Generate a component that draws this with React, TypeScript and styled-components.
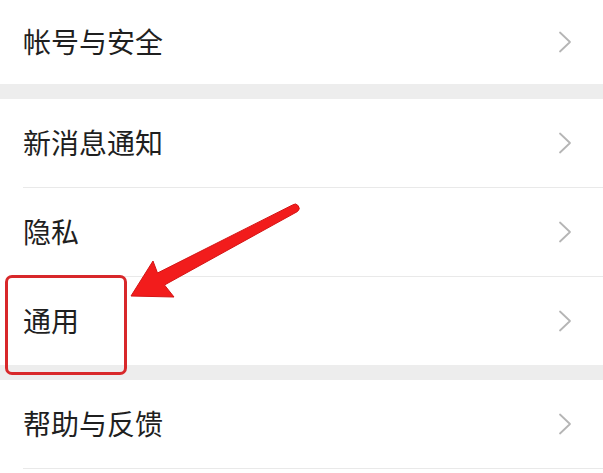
import styled, { createGlobalStyle } from "styled-components";

const GlobalStyle = createGlobalStyle`
  html, body {
    margin: 0;
    padding: 0;
    background: #ededed;
  }
  body {
    font-family: "Noto Sans CJK SC", "Noto Sans", sans-serif;
    overflow: hidden;
  }
`;

const Page = styled.div`
  position: relative;
  width: 603px;
  height: 473px;
  overflow: hidden;
  background: #ededed;
  display: flex;
  flex-direction: column;
  gap: 15px;
`;

const Group = styled.div`
  background: #ffffff;
  display: flex;
  flex-direction: column;
`;

interface RowProps {
  readonly $height?: number;
  readonly $divider?: boolean;
}

const Row = styled.div<RowProps>`
  position: relative;
  flex: 0 0 auto;
  height: ${(p) => p.$height ?? 88}px;
  display: flex;
  align-items: center;
  justify-content: space-between;
  padding: 0 31px 0 23px;
  border-bottom: ${(p) => (p.$divider ? "1px solid transparent" : "none")};
  &::after {
    content: "";
    display: ${(p) => (p.$divider ? "block" : "none")};
    position: absolute;
    left: 23px;
    right: 0;
    bottom: -1px;
    height: 1px;
    background: #e9e9e9;
  }
`;

const Label = styled.span`
  font-size: 28px;
  line-height: 1;
  color: #1f1f1f;
  margin-top: -3px;
`;

const Chevron = styled.svg`
  width: 14px;
  height: 22px;
  flex: 0 0 auto;
`;

// annotation drawn over the screenshot
const Highlight = styled.div`
  position: absolute;
  left: 5px;
  top: 275px;
  width: 122px;
  height: 100px;
  box-sizing: border-box;
  border: 3px solid #d8282a;
  border-radius: 7px;
`;

const ArrowLayer = styled.svg`
  position: absolute;
  left: 0;
  top: 0;
  width: 603px;
  height: 473px;
  pointer-events: none;
`;

function Arrow() {
  return (
    <Chevron viewBox="0 0 14 22">
      <polyline
        points="2,1.5 12,11 2,20.5"
        fill="none"
        stroke="#b5b5b5"
        strokeWidth="1.8"
        strokeLinecap="round"
        strokeLinejoin="round"
      />
    </Chevron>
  );
}

function SettingRow({ text, divider, height }: { text: string; divider?: boolean; height?: number }) {
  return (
    <Row $divider={divider} $height={height}>
      <Label>{text}</Label>
      <Arrow />
    </Row>
  );
}

export default function App() {
  return (
    <>
      <GlobalStyle />
      <Page>
        <Group>
          <SettingRow text="帐号与安全" height={84} />
        </Group>
        <Group>
          <SettingRow text="新消息通知" divider />
          <SettingRow text="隐私" divider />
          <SettingRow text="通用" />
        </Group>
        <Group>
          <SettingRow text="帮助与反馈" divider />
          <Row $height={40} />
        </Group>

        <Highlight />
        <ArrowLayer viewBox="0 0 603 473">
          <path
            d="M131 296 L153 261 L157.5 273 L292.5 205 A4 4 0 0 1 297.5 211.5 L164.5 285 L174 297 Z"
            fill="#f21c1c"
            stroke="#d41414"
            strokeWidth="1"
            strokeLinejoin="round"
          />
        </ArrowLayer>
      </Page>
    </>
  );
}
